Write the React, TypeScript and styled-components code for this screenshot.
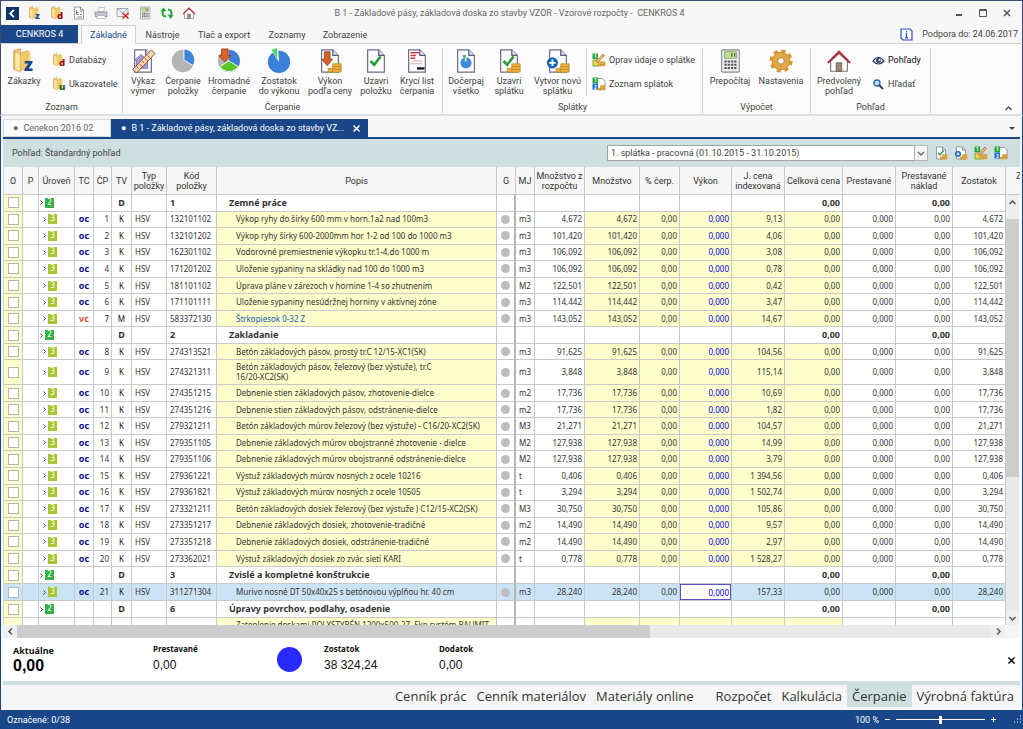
import React from "react";
import styled, { createGlobalStyle, css } from "styled-components";

const BLUE = "#19478a";
const TEAL = "#cfdfdf";
const YELLOW = "#fefecb";
const LINE = "#c9c9cc";

const GlobalStyle = createGlobalStyle`
  *, *::before, *::after { box-sizing: border-box; }
  body { margin: 0; font-family: Roboto, "Liberation Sans", sans-serif; font-size: 9px; line-height: 10px; color: #444; background: #f7f7f7; }
  button, input, select { font: inherit; color: inherit; margin: 0; }
  button { border: 0; background: none; padding: 0; cursor: pointer; }
  a { color: inherit; text-decoration: none; }
  svg { display: block; flex: none; }
`;

const Window = styled.div`
  display: flex;
  flex-direction: column;
  height: 100vh;
  border-top: 1px solid #3f4a70;
  overflow: hidden;
`;

const TitleBar = styled.header`
  flex: none;
  display: flex;
  align-items: center;
  height: 24px;
  padding: 0 9px 0 5px;
  border-left: 1px solid #3f4a70;
  border-right: 1px solid #3f4a70;
`;
const QuickBar = styled.div`
  display: flex;
  flex: 1;
  gap: 8px;
`;
const QuickButton = styled.button`
  width: 14px;
  height: 14px;
`;
const Title = styled.h1`
  margin: 0;
  font-size: 9px;
  font-weight: 400;
  color: #666;
  white-space: pre;
`;
const WindowButtons = styled.div`
  display: flex;
  flex: 1;
  justify-content: flex-end;
  gap: 12px;
`;
const WindowButton = styled.button`
  width: 12px;
  height: 12px;
`;

const RibbonTabs = styled.nav`
  flex: none;
  display: flex;
  height: 19px;
  border-left: 1px solid #3f4a70;
  border-right: 1px solid #3f4a70;
  border-bottom: 1px solid #cfcfcf;
`;
const FileTab = styled.button`
  width: 77px;
  height: 18px;
  margin-right: 3px;
  background: ${BLUE};
  color: #fff;
`;
const RibbonTab = styled.button<{ $active?: boolean; $width: number }>`
  width: ${(p) => p.$width}px;
  height: 19px;
  ${(p) =>
    p.$active &&
    css`
      color: ${BLUE};
      background: #fbfbfb;
      border: 1px solid #cfcfcf;
      border-bottom-color: #fbfbfb;
    `}
`;
const Support = styled.div`
  display: flex;
  align-items: center;
  gap: 9px;
  margin-left: auto;
  padding-right: 4px;
`;

const Ribbon = styled.section`
  flex: none;
  display: flex;
  height: 72px;
  padding: 4px 0 1px;
  background: #fbfbfb;
  border-left: 1px solid #3f4a70;
  border-right: 1px solid #3f4a70;
  border-bottom: 2px solid #dfdfdf;
`;
const Group = styled.div<{ $width: number }>`
  flex: none;
  width: ${(p) => p.$width}px;
  display: flex;
  flex-direction: column;
  border-right: 1px solid #d2d2d2;
`;
const GroupBody = styled.div`
  display: flex;
  flex: 1;
`;
const GroupTitle = styled.div`
  height: 11px;
  text-align: center;
`;
const BigButton = styled.button<{ $width: number }>`
  width: ${(p) => p.$width}px;
  display: flex;
  flex-direction: column;
  align-items: center;
  align-self: flex-start;
  white-space: pre;
  svg { margin-bottom: 2px; }
`;
const SmallList = styled.div<{ $ruled?: boolean }>`
  display: flex;
  flex-direction: column;
  gap: 10px;
  height: 48px;
  padding: 5px 0 0 5px;
  ${(p) => p.$ruled && css`border-left: 1px solid #d2d2d2;`}
`;
const SmallButton = styled.button<{ $strong?: boolean }>`
  display: flex;
  align-items: center;
  gap: 3px;
  height: 14px;
  white-space: nowrap;
  ${(p) => p.$strong && css`color: #111;`}
`;
const Collapse = styled.button`
  align-self: flex-end;
  margin: 0 9px 0 auto;
`;

const Body = styled.main`
  flex: 1;
  min-height: 0;
  display: flex;
  flex-direction: column;
  padding: 3px 2px 0;
  border-left: 1px solid ${BLUE};
  border-right: 1px solid ${BLUE};
`;
const DocTabs = styled.nav`
  flex: none;
  display: flex;
  height: 20px;
  border-bottom: 2px solid ${BLUE};
`;
const DocTab = styled.button<{ $active?: boolean; $width: number }>`
  width: ${(p) => p.$width}px;
  display: flex;
  align-items: center;
  gap: 5px;
  padding: 0 6px 0 9px;
  white-space: nowrap;
  background: ${(p) => (p.$active ? BLUE : "#f9f9f9")};
  color: ${(p) => (p.$active ? "#fff" : "#666")};
  border: 1px solid ${(p) => (p.$active ? BLUE : "#d8d8d8")};
  svg { margin-left: auto; }
`;
const DocMenu = styled.button`
  margin: 0 4px 0 auto;
`;

const FilterBar = styled.div`
  flex: none;
  display: flex;
  align-items: center;
  height: 28px;
  padding: 0 12px 0 9px;
  background: ${TEAL};
`;
const PeriodBox = styled.label`
  position: relative;
  width: 321px;
  margin: 0 6px 0 auto;
  svg { position: absolute; right: 0; top: 0; pointer-events: none; }
`;
const Period = styled.select`
  appearance: none;
  display: block;
  width: 100%;
  height: 16px;
  padding: 0 18px 0 3px;
  border: 1px solid #9aa5a5;
  border-radius: 0;
  background: #fff;
`;
const FilterTools = styled.div`
  display: flex;
  gap: 6px;
`;

const GridArea = styled.div`
  flex: 1;
  min-height: 0;
  display: flex;
  background: #fff;
  border-left: 1px solid #d5d5d5;
`;
const GridView = styled.div`
  flex: 1;
  min-width: 0;
  overflow: hidden;
`;
const Table = styled.table`
  width: 100%;
  height: 476px;
  table-layout: fixed;
  border-collapse: separate;
  border-spacing: 0;
  font-family: "Noto Sans", sans-serif;
  font-size: 8px;
  color: #333;
`;
const Col = styled.col<{ $width?: number }>`
  width: ${(p) => (p.$width ? p.$width + "px" : "auto")};
`;
const Head = styled.th`
  height: 28px;
  padding: 0;
  font-family: Roboto, sans-serif;
  font-size: 9px;
  font-weight: 400;
  background: #f6f6f6;
  border: solid ${LINE};
  border-width: 0 1px 1px 0;
  white-space: pre;
`;
type CellProps = { $align?: "right" | "center"; $tint?: boolean; $thick?: boolean; $pad?: number };
const Cell = styled.td<CellProps>`
  padding: 0 ${(p) => (p.$align === "right" ? 2 : 0)}px 0 ${(p) => p.$pad ?? (p.$align ? 0 : 3)}px;
  text-align: ${(p) => p.$align ?? "left"};
  border: solid ${LINE};
  border-width: 0 1px 1px 0;
  ${(p) => p.$thick && css`border-right: 2px solid #b5b5b8;`}
  ${(p) => p.$tint && css`background: ${YELLOW};`}
  white-space: pre;
  overflow: hidden;
`;
const ItemRow = styled.tr<{ $tall?: boolean; $selected?: boolean }>`
  height: ${(p) => (p.$tall ? 24 : 16)}px;
  ${(p) => p.$selected && css`td { background: #cbe4f5; }`}
`;
const SectionRow = styled.tr`
  height: 16px;
  font-size: 9px;
  font-weight: 700;
`;
const Tick = styled.input`
  appearance: none;
  display: block;
  width: 11px;
  height: 11px;
  margin: 0 auto;
  border: 1px solid #b5b5b5;
  background: #fff;
`;
const Level = styled.span<{ $section?: boolean }>`
  display: flex;
  align-items: center;
  gap: 1px;
  padding-left: ${(p) => (p.$section ? 1 : 4)}px;
`;
const LevelBox = styled.b<{ $section?: boolean }>`
  width: 9px;
  height: 10px;
  font: 400 8px/10px "DejaVu Sans Condensed", sans-serif;
  text-align: center;
  color: #fff;
  background: ${(p) => (p.$section ? "#35b34a" : "#a5c832")};
`;
const Kind = styled.b<{ $own?: boolean }>`
  font-size: 9px;
  color: ${(p) => (p.$own ? "#e2512d" : "#0a0a86")};
`;
const Dark = styled.span`
  color: #111;
`;
const ItemLink = styled.a`
  color: #0d5cb8;
`;
const Dot = styled.span`
  display: block;
  width: 9px;
  height: 9px;
  margin: 0 auto;
  border-radius: 50%;
  background: #bdbdbd;
`;
const Output = styled.span`
  color: #0000e0;
`;
const OutputInput = styled.input`
  display: block;
  width: 100%;
  height: 16px;
  padding: 0 1px;
  text-align: right;
  color: #0000e0;
  background: #fff;
  border: 1px solid #5a50c8;
  border-radius: 0;
`;

const SideRail = styled.div`
  flex: none;
  width: 14px;
  display: flex;
  flex-direction: column;
`;
const SideHead = styled.div`
  height: 28px;
  padding: 4px 0 0 10px;
  overflow: hidden;
  background: #f6f6f6;
  border-bottom: 1px solid ${LINE};
`;
const VTrack = styled.div`
  flex: 1;
  width: 13px;
  display: flex;
  flex-direction: column;
  background: #e9e9e9;
`;
const VArrow = styled.button`
  height: 24px;
  padding-bottom: 10px;
  display: grid;
  place-items: center;
  background: #efefef;
`;
const VThumb = styled.div`
  flex: 259;
  background: #cdcdcd;
`;
const VRest = styled.div`
  flex: 134;
`;
const VArrowEnd = styled(VArrow)`
  height: 14px;
  padding: 0;
`;
const HTrack = styled.div`
  flex: none;
  display: flex;
  height: 13px;
  margin-right: 2px;
  background: #e9e9e9;
`;
const HArrow = styled.button`
  width: 14px;
  display: grid;
  place-items: center;
  background: #efefef;
`;
const HThumb = styled.div`
  flex: 633;
  background: #cdcdcd;
`;
const HRest = styled.div`
  flex: 341;
`;
const HCorner = styled.div`
  width: 13px;
  background: #f6f6f6;
`;

const Summary = styled.section`
  flex: none;
  display: flex;
  height: 43px;
  padding: 5px 4px 0 10px;
  background: #fff;
  color: #111;
`;
const Stat = styled.dl<{ $width: number; $main?: boolean }>`
  margin: 0;
  width: ${(p) => p.$width}px;
  dt { font: 700 8px/12px "Noto Sans", sans-serif; }
  dd { margin: 0; font: 400 12px/20px "Liberation Sans", sans-serif; }
  ${(p) =>
    p.$main &&
    css`
      dt { padding-top: 2px; font-size: 9px; }
      dd { font-size: 16px; line-height: 18px; font-weight: 700; color: #000; }
    `}
`;
const StatDot = styled.div`
  width: 25px;
  height: 25px;
  margin: 4px 22px 0 0;
  border-radius: 50%;
  background: #2a2aff;
`;
const SummaryClose = styled.button`
  margin: 0 0 4px auto;
`;

const ViewTabs = styled.nav`
  flex: none;
  display: flex;
  justify-content: flex-end;
  height: 29px;
  padding: 0 1px 3px 0;
  border-top: 4px solid ${TEAL};
  background: #f6f6f6;
`;
const ViewTab = styled.button<{ $active?: boolean; $spaced?: boolean }>`
  padding: 0 5px;
  margin-left: ${(p) => (p.$spaced ? 12 : 0)}px;
  font: 400 13px/20px "Open Sans", sans-serif;
  color: #333;
  background: ${(p) => (p.$active ? TEAL : "none")};
`;

const StatusBar = styled.footer`
  flex: none;
  display: flex;
  align-items: center;
  height: 19px;
  padding: 0 1px 0 7px;
  background: ${BLUE};
  color: #fff;
`;
const ZoomBox = styled.div`
  display: flex;
  align-items: center;
  gap: 5px;
  margin: 0 16px 0 auto;
`;
const ZoomRange = styled.input`
  appearance: none;
  width: 89px;
  height: 11px;
  background: linear-gradient(#fff, #fff) center / 100% 1px no-repeat;
  &::-webkit-slider-thumb { appearance: none; width: 3px; height: 8px; background: #fff; }
`;

/* ---------- icons ---------- */

const Folder = ({ letter, color, size = 14 }: { letter: string; color: string; size?: number }) => (
  <svg width={size} height={size} viewBox="0 0 28 28">
    <path d="M3 3 10 1v5l8-3v18l-8 3-7-1z" fill="#f3d27a" stroke="#c79a3c" strokeWidth="1" />
    <path d="M10 6v20L4 23V4z" fill="#fbe7a6" stroke="#d2a94e" strokeWidth=".8" />
    <path d="M11 6 21 3v17l-10 5z" fill="#f0c964" opacity=".8" />
    <text x="14" y="25" fontFamily="Open Sans" fontWeight="800" fontSize="19" fill={color}>{letter}</text>
  </svg>
);

const Page = () => (
  <>
    <path d="M5 2h12l6 6v18H5z" fill="#fdfdff" stroke="#6a6f86" strokeWidth="1.3" />
    <path d="M17 2v6h6" fill="#dfe3ef" stroke="#55597a" strokeWidth="1.3" />
  </>
);
const Coins = () => (
  <g fill="#e9b040" stroke="#bd8420" strokeWidth=".8">
    <path d="M12 22h7v4h-7z" />
    <path d="M17 17h9v9h-9z" />
    <path d="M17 20h9M17 23h9" />
  </g>
);
const Tickmark = () => <path d="m8 14 4 4 7-9" fill="none" stroke="#2f9a3a" strokeWidth="2.8" />;
const Plus = () => (
  <>
    <circle cx="8" cy="16" r="6" fill="#1763b8" />
    <path d="M8 12.500v7M4.500 16h7" stroke="#fff" strokeWidth="2" />
  </>
);
const Badges = () => (
  <g fontFamily="Roboto" fontWeight="700" fontSize="10" fill="#fff">
    <rect x="1" y="1" width="11" height="11" fill="#2ca33a" />
    <text x="4" y="10">1</text>
  </g>
);

type IconName =
  | "measure" | "pie" | "pieGreen" | "pieRest" | "perform" | "check" | "cover" | "power" | "checkCoins"
  | "plusCoins" | "calc" | "gear" | "house" | "editPay" | "listPay" | "back" | "preview" | "print"
  | "mailX" | "refresh";

const ART: Record<IconName, React.ReactNode> = {
  measure: (
    <>
      <Page />
      <path d="M5 13 12 7l7 6v9H7v-9z" fill="#a99bd6" stroke="#7a6bb5" strokeWidth=".8" />
      <path d="M3 23 23 2l4 4L7 27z" fill="#f6d7b0" stroke="#8a4b2a" strokeWidth="1" />
      <path d="m7 20 2 2m1-5 3 3m0-6 2 2m1-5 3 3m0-6 2 2" stroke="#8a4b2a" strokeWidth="1" />
    </>
  ),
  pie: (
    <>
      <circle cx="14" cy="14" r="12" fill="#b4b4b6" />
      <path d="M15 13V1a12 12 0 0 1 10 18z" fill="#3f83d8" stroke="#fbfbfb" strokeWidth="1" />
    </>
  ),
  pieGreen: (
    <>
      <circle cx="14" cy="14" r="12" fill="#b4b4b6" />
      <path d="M14 14V2a12 12 0 0 1 10 18z" fill="#3f7fd4" />
      <path d="M14 14 24 20a12 12 0 0 1-20 0z" fill="#5cc628" stroke="#fbfbfb" strokeWidth="1" />
      <path d="M6 1h7v7h3l-6.500 7L3 8h3z" fill="#d9622a" stroke="#8f3412" strokeWidth=".8" />
    </>
  ),
  pieRest: (
    <>
      <circle cx="14" cy="15" r="12" fill="#3a80d6" />
      <path d="M14 15 5 2l8-2z" fill="#fbfbfb" />
      <path d="m12 12-6-10L12 0z" fill="#4fd36a" />
    </>
  ),
  perform: (
    <>
      <Page />
      <path d="M8 4h6v8h3l-6 7-6-7h3z" fill="#d9622a" stroke="#8f3412" strokeWidth=".8" />
      <Coins />
    </>
  ),
  check: (<><Page /><Tickmark /></>),
  cover: (
    <>
      <Page />
      <path d="M7 5h9M7 8h6M7 11h5" stroke="#cc3b3b" strokeWidth="1.600" />
      <path d="M9 14h11M7 17h13" stroke="#c9a0a0" strokeWidth="1" />
      <path d="M14 22h8" stroke="#111" strokeWidth="2.500" />
    </>
  ),
  power: (
    <>
      <Page />
      <circle cx="14" cy="16" r="6" fill="#3f8bd8" />
      <path d="M14 16 11 8l4-1z" fill="#fdfdff" />
      <path d="m13 13-3-5 4-1z" fill="#3fae74" />
    </>
  ),
  checkCoins: (<><Page /><Tickmark /><Coins /></>),
  plusCoins: (<><Page /><Plus /><Coins /></>),
  calc: (
    <>
      <rect x="5" y="2" width="19" height="24" rx="1" fill="#ececec" stroke="#8a8f8a" strokeWidth="1.200" />
      <rect x="8" y="4" width="13" height="7" fill="#c3dfa0" stroke="#7f9a63" strokeWidth=".8" />
      <path d="M16 5.500v4M19 5.500v4" stroke="#3c5a2a" strokeWidth="1.200" />
      <path d="M8 14.500h13M8 18h13M8 21.500h13" stroke="#555" strokeWidth="2" strokeDasharray="2.500 1" />
    </>
  ),
  gear: (
    <>
      <circle cx="14" cy="14" r="10.500" fill="none" stroke="#d99a33" strokeWidth="4" strokeDasharray="4.400 3.850" />
      <circle cx="14" cy="14" r="6.500" fill="none" stroke="#e0a747" strokeWidth="6" />
      <circle cx="14" cy="14" r="9.500" fill="none" stroke="#c98d2c" strokeWidth="1" />
      <circle cx="14" cy="14" r="3.500" fill="#fbfbfb" stroke="#b57a1e" strokeWidth="1" />
    </>
  ),
  house: (
    <>
      <path d="M5 14v11h18V14l-9-8z" fill="#fff" stroke="#777" strokeWidth="1.200" />
      <path d="M2 16 14 4l12 12" fill="none" stroke="#b3283a" strokeWidth="2.200" />
      <rect x="11" y="16" width="6" height="9" fill="#a9876e" stroke="#555" strokeWidth=".8" />
    </>
  ),
  editPay: (
    <>
      <Badges />
      <path d="M2 14h12v12H2z" fill="#ffd24a" stroke="#2ca33a" strokeWidth="1.500" />
      <Coins />
      <path d="m8 17 3 3L25 5l-3-3z" fill="#f3c56a" stroke="#a33" strokeWidth="1.200" />
    </>
  ),
  listPay: (
    <>
      <path d="M10 3h11l5 5v17H10z" fill="#fff" stroke="#667" strokeWidth="1.200" />
      <Badges />
      <rect x="1" y="13" width="11" height="12" fill="#1f6fd0" />
      <text x="4" y="23" fontFamily="Roboto" fontWeight="700" fontSize="10" fill="#fff">2</text>
      <Coins />
    </>
  ),
  back: (
    <>
      <rect width="28" height="28" fill="#0e3567" />
      <path d="m17 6-8 8 8 8" fill="none" stroke="#fff" strokeWidth="4" />
    </>
  ),
  preview: (
    <>
      <Page />
      <path d="M9 8v9h4m-4-4h4m3-2h4m-4 6h4m-9 5h9" fill="none" stroke="#555a70" strokeWidth="1.600" />
    </>
  ),
  print: (
    <>
      <path d="M8 11 11 3h10l-2 8z" fill="#fff" stroke="#8a8ea0" />
      <path d="M2 12h24v9H2z" fill="#c3c7d3" stroke="#777c8e" strokeWidth="1.200" />
      <path d="M7 19h14l2 6H5z" fill="#fff" stroke="#8a8ea0" />
    </>
  ),
  mailX: (
    <>
      <path d="M2 5h22v16H2z" fill="#f4f4f8" stroke="#8a8ea0" strokeWidth="1.500" />
      <path d="m2 5 11 9 11-9" fill="none" stroke="#8a8ea0" strokeWidth="1.500" />
      <path d="m13 14 12 11M25 14 13 25" stroke="#d8201f" strokeWidth="3" />
    </>
  ),
  refresh: (
    <>
      <path d="M12 21C5 21 4 15 6 9" fill="none" stroke="#22a53a" strokeWidth="4" />
      <path d="M1 11 7 3l6 7z" fill="#22a53a" />
      <path d="M16 7c7 0 8 6 6 12" fill="none" stroke="#22a53a" strokeWidth="4" />
      <path d="m15 17 6 9 6-8z" fill="#22a53a" />
    </>
  ),
};

const Icon = ({ name, size = 28 }: { name: IconName; size?: number }) => (
  <svg width={size} height={size} viewBox="0 0 28 28">{ART[name]}</svg>
);

const Chevron = ({ d, color = "#555" }: { d: string; color?: string }) => (
  <svg width="9" height="9" viewBox="0 0 9 9">
    <path d={d} fill="none" stroke={color} strokeWidth="1.500" />
  </svg>
);
const UP = "M1.500 6 4.500 3l3 3";
const DOWN = "m1.500 3 3 3 3-3";
const LEFT = "m6 1.500-3 3 3 3";
const RIGHT = "m3 1.500 3 3-3 3";
const CROSS = "m1.500 1.500 6 6m0-6-6 6";

/* ---------- data ---------- */

type Item = { n: number; code: string; text: string; unit: string; qty: string; price: string; own?: boolean; tall?: boolean; selected?: boolean };
type Section = { section: string; text: string };

const item = (n: number, code: string, text: string, unit: string, qty: string, price: string, extra: Partial<Item> = {}): Item => ({
  n, code, text, unit, qty, price, ...extra,
});

const ROWS: (Item | Section)[] = [
  { section: "1", text: "Zemné práce" },
  item(1, "132101102", "Výkop ryhy do šírky 600 mm v horn.1a2 nad 100m3", "m3", "4,672", "9,13"),
  item(2, "132101202", "Výkop ryhy šírky 600-2000mm hor 1-2 od 100 do 1000 m3", "m3", "101,420", "4,06"),
  item(3, "162301102", "Vodorovné premiestnenie výkopku tr.1-4,do 1000 m", "m3", "106,092", "3,08"),
  item(4, "171201202", "Uloženie sypaniny na skládky nad 100 do 1000 m3", "m3", "106,092", "0,78"),
  item(5, "181101102", "Úprava pláne v zárezoch v hornine 1-4 so zhutnením", "M2", "122,501", "0,42"),
  item(6, "171101111", "Uloženie sypaniny nesúdržnej horniny v aktívnej zóne", "m3", "114,442", "3,47"),
  item(7, "583372130", "Štrkopiesok 0-32 Z", "m3", "143,052", "14,67", { own: true }),
  { section: "2", text: "Zakladanie" },
  item(8, "274313521", "Betón základových pásov, prostý tr.C 12/15-XC1(SK)", "m3", "91,625", "104,56"),
  item(9, "274321311", "Betón základových pásov, železový (bez výstuže), tr.C\n16/20-XC2(SK)", "m3", "3,848", "115,14", { tall: true }),
  item(10, "274351215", "Debnenie stien základových pásov, zhotovenie-dielce", "m2", "17,736", "10,69"),
  item(11, "274351216", "Debnenie stien základových pásov, odstránenie-dielce", "m2", "17,736", "1,82"),
  item(12, "279321211", "Betón základových múrov železový (bez výstuže) - C16/20-XC2(SK)", "M3", "21,271", "104,57"),
  item(13, "279351105", "Debnenie základových múrov obojstranné zhotovenie - dielce", "M2", "127,938", "14,99"),
  item(14, "279351106", "Debnenie základových múrov obojstranné odstránenie-dielce", "M2", "127,938", "3,79"),
  item(15, "279361221", "Výstuž základových múrov nosných z ocele 10216", "t", "0,406", "1 394,56"),
  item(16, "279361821", "Výstuž základových múrov nosných z ocele 10505", "t", "3,294", "1 502,74"),
  item(17, "273321211", "Betón základových dosiek železový (bez výstuže ) C12/15-XC2(SK)", "M3", "30,750", "105,86"),
  item(18, "273351217", "Debnenie základových dosiek, zhotovenie-tradičné", "m2", "14,490", "9,57"),
  item(19, "273351218", "Debnenie základových dosiek, odstránenie-tradičné", "m2", "14,490", "2,97"),
  item(20, "273362021", "Výstuž základových dosiek zo zvár. sietí KARI", "t", "0,778", "1 528,27"),
  { section: "3", text: "Zvislé a kompletné konštrukcie" },
  item(21, "311271304", "Murivo nosné DT 50x40x25 s betónovou výplňou hr. 40 cm", "m3", "28,240", "157,33", { selected: true }),
  { section: "6", text: "Úpravy povrchov, podlahy, osadenie" },
  item(22, "", "Zateplenie doskami POLYSTYRÉN 1200x500-27, Fkp systém BAUMIT\n ", "", "", "", { tall: true }),
];

const COLUMNS: [string, number?][] = [
  ["O", 19], ["P", 16], ["Úroveň", 36], ["TC", 19], ["ČP", 18], ["TV", 20], ["Typ\npoložky", 35], ["Kód\npoložky", 50],
  ["Popis"], ["G", 19], ["MJ", 19], ["Množstvo z\nrozpočtu", 50], ["Množstvo", 55], ["% čerp.", 40], ["Výkon", 52],
  ["J. cena\nindexovaná", 53], ["Celková cena", 58], ["Prestavané", 53], ["Prestavané\nnáklad", 57], ["Zostatok", 53],
];

const LevelTag = ({ section }: { section?: boolean }) => (
  <Level $section={section}>
    <svg width="4" height="7" viewBox="0 0 4 7"><path d="M.500 1.500 2.500 3.500l-2 2" fill="none" stroke="#444" /></svg>
    <LevelBox $section={section}>{section ? 2 : 3}</LevelBox>
  </Level>
);

const SectionLine = ({ row }: { row: Section }) => (
  <SectionRow>
    <Cell $align="center" $tint><Tick type="checkbox" aria-label={row.text} /></Cell>
    <Cell /><Cell $pad={0}><LevelTag section /></Cell><Cell /><Cell />
    <Cell $align="center">D</Cell><Cell /><Cell>{row.section}</Cell>
    <Cell $pad={12}>{row.text}</Cell><Cell $thick /><Cell /><Cell /><Cell /><Cell /><Cell /><Cell />
    <Cell $align="right">0,00</Cell><Cell /><Cell $align="right">0,00</Cell><Cell />
  </SectionRow>
);

const PartialLine = ({ row }: { row: Item }) => (
  <ItemRow $tall>
    <Cell $tint /><Cell /><Cell /><Cell /><Cell /><Cell /><Cell /><Cell />
    <Cell $tint $pad={19}>{row.text}</Cell>
    <Cell $thick /><Cell /><Cell />
    <Cell $tint /><Cell $tint /><Cell $tint /><Cell $tint /><Cell $tint />
    <Cell /><Cell /><Cell />
  </ItemRow>
);

const ItemLine = ({ row }: { row: Item }) => (
  <ItemRow $tall={row.tall} $selected={row.selected}>
    <Cell $align="center" $tint><Tick type="checkbox" aria-label={row.code} /></Cell>
    <Cell />
    <Cell $pad={0}><LevelTag /></Cell>
    <Cell $align="center"><Kind $own={row.own}>{row.own ? "vc" : "oc"}</Kind></Cell>
    <Cell $align="right">{row.n}</Cell>
    <Cell $align="center"><Dark>{row.own ? "M" : "K"}</Dark></Cell>
    <Cell>HSV</Cell>
    <Cell>{row.code}</Cell>
    <Cell $tint $pad={19}>{row.own ? <ItemLink href="#item">{row.text}</ItemLink> : row.text}</Cell>
    <Cell $align="center" $thick><Dot /></Cell>
    <Cell>{row.unit}</Cell>
    <Cell $align="right">{row.qty}</Cell>
    <Cell $align="right" $tint>{row.qty}</Cell>
    <Cell $align="right" $tint>0,00</Cell>
    {row.selected ? (
      <Cell $pad={0}><OutputInput defaultValue="0,000" aria-label="Výkon" /></Cell>
    ) : (
      <Cell $align="right" $tint><Output>0,000</Output></Cell>
    )}
    <Cell $align="right" $tint>{row.price}</Cell>
    <Cell $align="right" $tint>0,00</Cell>
    <Cell $align="right">0,000</Cell>
    <Cell $align="right">0,00</Cell>
    <Cell $align="right">{row.qty}</Cell>
  </ItemRow>
);

const GridLine = ({ row }: { row: Item | Section }) => {
  if ("section" in row) return <SectionLine row={row} />;
  return row.code ? <ItemLine row={row} /> : <PartialLine row={row} />;
};

const Big = ({ icon, label, width }: { icon: IconName; label: string; width: number }) => (
  <BigButton $width={width}><Icon name={icon} size={26} />{label}</BigButton>
);

export default function App() {
  return (
    <Window>
      <GlobalStyle />
      <TitleBar>
        <QuickBar>
          <QuickButton aria-label="Späť"><Icon name="back" size={13} /></QuickButton>
          <QuickButton aria-label="Zákazky"><Folder letter="z" color="#174a8c" /></QuickButton>
          <QuickButton aria-label="Databázy"><Folder letter="d" color="#a00f1c" /></QuickButton>
          <QuickButton aria-label="Náhľad"><Icon name="preview" size={14} /></QuickButton>
          <QuickButton aria-label="Tlač"><Icon name="print" size={14} /></QuickButton>
          <QuickButton aria-label="Zrušiť"><Icon name="mailX" size={14} /></QuickButton>
          <QuickButton aria-label="Kalkulačka"><Icon name="calc" size={14} /></QuickButton>
          <QuickButton aria-label="Obnoviť"><Icon name="refresh" size={14} /></QuickButton>
          <QuickButton aria-label="Domov"><Icon name="house" size={14} /></QuickButton>
        </QuickBar>
        <Title>{"B 1 - Základové pásy, základová doska zo stavby VZOR - Vzorové rozpočty -  CENKROS 4"}</Title>
        <WindowButtons>
          <WindowButton aria-label="Minimalizovať">
            <svg width="12" height="12"><path d="M3 8h6" stroke="#555" strokeWidth="2" /></svg>
          </WindowButton>
          <WindowButton aria-label="Maximalizovať">
            <svg width="12" height="12"><path d="M2.500 2.500h7v7h-7zM2.500 3.500h7" fill="none" stroke="#555" /></svg>
          </WindowButton>
          <WindowButton aria-label="Zavrieť">
            <svg width="12" height="12"><path d="m3 3 6 6m0-6-6 6" stroke="#555" strokeWidth="1.500" /></svg>
          </WindowButton>
        </WindowButtons>
      </TitleBar>

      <RibbonTabs>
        <FileTab>CENKROS 4</FileTab>
        <RibbonTab $active $width={55}>Základné</RibbonTab>
        <RibbonTab $width={53}>Nástroje</RibbonTab>
        <RibbonTab $width={70}>Tlač a export</RibbonTab>
        <RibbonTab $width={56}>Zoznamy</RibbonTab>
        <RibbonTab $width={60}>Zobrazenie</RibbonTab>
        <Support>
          <svg width="13" height="13" viewBox="0 0 13 13">
            <path d="M1 1h9l2 2v9H3l-2-2z" fill="#fff" stroke="#2450b4" strokeWidth="1.200" />
            <path d="M6.500 3v1.500m0 1V10M5.500 6h1M5 9.800h3" stroke="#2450b4" strokeWidth="1.200" />
          </svg>
          Podpora do: 24.06.2017
        </Support>
      </RibbonTabs>

      <Ribbon>
        <Group $width={122}>
          <GroupBody>
            <BigButton $width={46}><Folder letter="z" color="#174a8c" size={26} />Zákazky</BigButton>
            <SmallList>
              <SmallButton><Folder letter="d" color="#a00f1c" />Databázy</SmallButton>
              <SmallButton><Folder letter="u" color="#1c5a2c" />Ukazovatele</SmallButton>
            </SmallList>
          </GroupBody>
          <GroupTitle>Zoznam</GroupTitle>
        </Group>
        <Group $width={320}>
          <GroupBody>
            <Big icon="measure" label={"Výkaz\nvýmer"} width={40} />
            <Big icon="pie" label={"Čerpanie\npoložky"} width={40} />
            <Big icon="pieGreen" label={"Hromadné\nčerpanie"} width={52} />
            <Big icon="pieRest" label={"Zostatok\ndo výkonu"} width={48} />
            <Big icon="perform" label={"Výkon\npodľa ceny"} width={54} />
            <Big icon="check" label={"Uzavri\npoložku"} width={38} />
            <Big icon="cover" label={"Krycí list\nčerpania"} width={44} />
          </GroupBody>
          <GroupTitle>Čerpanie</GroupTitle>
        </Group>
        <Group $width={260}>
          <GroupBody>
            <Big icon="power" label={"Dočerpaj\nvšetko"} width={46} />
            <Big icon="checkCoins" label={"Uzavri\nsplátku"} width={40} />
            <Big icon="plusCoins" label={"Vytvor novú\nsplátku"} width={57} />
            <SmallList $ruled>
              <SmallButton><Icon name="editPay" size={14} />Oprav údaje o splátke</SmallButton>
              <SmallButton><Icon name="listPay" size={14} />Zoznam splátok</SmallButton>
            </SmallList>
          </GroupBody>
          <GroupTitle>Splátky</GroupTitle>
        </Group>
        <Group $width={108}>
          <GroupBody>
            <Big icon="calc" label="Prepočítaj" width={54} />
            <Big icon="gear" label="Nastavenia" width={48} />
          </GroupBody>
          <GroupTitle>Výpočet</GroupTitle>
        </Group>
        <Group $width={120}>
          <GroupBody>
            <Big icon="house" label={"Predvolený\npohľad"} width={56} />
            <SmallList>
              <SmallButton $strong>
                <svg width="13" height="13" viewBox="0 0 13 13">
                  <path d="M1 7q5.500-7 11 0-5.500 6-11 0z" fill="#fff" stroke="#1b2a44" strokeWidth="1.200" />
                  <circle cx="6.500" cy="6.500" r="2.500" fill="#27466f" />
                  <circle cx="7.500" cy="6" r="1" fill="#fff" />
                </svg>
                Pohľady
              </SmallButton>
              <SmallButton>
                <svg width="13" height="13" viewBox="0 0 13 13">
                  <circle cx="5" cy="5" r="3" fill="#bfe0f7" stroke="#2f6fb0" strokeWidth="1.400" />
                  <path d="m7 7 4 4" stroke="#2b3f66" strokeWidth="2" />
                </svg>
                Hľadať
              </SmallButton>
            </SmallList>
          </GroupBody>
          <GroupTitle>Pohľad</GroupTitle>
        </Group>
        <Collapse aria-label="Zbaliť"><Chevron d={UP} /></Collapse>
      </Ribbon>

      <Body>
        <DocTabs>
          <DocTab $width={108}><span>●</span>Cenekon 2016 02</DocTab>
          <DocTab $active $width={257}>
            <span>●</span>B 1 - Základové pásy, základová doska zo stavby VZ...
            <Chevron d={CROSS} color="#fff" />
          </DocTab>
          <DocMenu aria-label="Zoznam kariet">
            <svg width="8" height="5"><path d="M1 1h6L4 4z" fill="#444" /></svg>
          </DocMenu>
        </DocTabs>

        <FilterBar>
          Pohľad: Štandardný pohľad
          <PeriodBox>
            <Period aria-label="Splátka">
              <option>1. splátka - pracovná (01.10.2015 - 31.10.2015)</option>
            </Period>
            <svg width="14" height="16">
              <path d="M.500.500h13v15H.500z" fill="#f4f4f4" stroke="#b0b8b8" />
              <path d="m4 7 3 3 3-3" fill="none" stroke="#555" strokeWidth="1.200" />
            </svg>
          </PeriodBox>
          <FilterTools>
            <QuickButton aria-label="Uzavri splátku"><Icon name="checkCoins" size={14} /></QuickButton>
            <QuickButton aria-label="Vytvor splátku"><Icon name="plusCoins" size={14} /></QuickButton>
            <QuickButton aria-label="Oprav splátku"><Icon name="editPay" size={14} /></QuickButton>
            <QuickButton aria-label="Zoznam splátok"><Icon name="listPay" size={14} /></QuickButton>
          </FilterTools>
        </FilterBar>

        <GridArea>
          <GridView>
            <Table>
              <colgroup>{COLUMNS.map(([name, width]) => <Col key={name} $width={width} />)}</colgroup>
              <thead><tr>{COLUMNS.map(([name]) => <Head key={name} scope="col">{name}</Head>)}</tr></thead>
              <tbody>{ROWS.map((row) => <GridLine key={row.text} row={row} />)}</tbody>
            </Table>
          </GridView>
          <SideRail>
            <SideHead>Z</SideHead>
            <VTrack>
              <VArrow aria-label="Hore"><Chevron d={UP} /></VArrow>
              <VThumb />
              <VRest />
              <VArrowEnd aria-label="Dole"><Chevron d={DOWN} /></VArrowEnd>
            </VTrack>
          </SideRail>
        </GridArea>
        <HTrack>
          <HArrow aria-label="Vľavo"><Chevron d={LEFT} /></HArrow>
          <HThumb />
          <HRest />
          <HArrow aria-label="Vpravo"><Chevron d={RIGHT} /></HArrow>
          <HCorner />
        </HTrack>

        <Summary>
          <Stat $width={140} $main><dt>Aktuálne</dt><dd>0,00</dd></Stat>
          <Stat $width={124}><dt>Prestavané</dt><dd>0,00</dd></Stat>
          <StatDot />
          <Stat $width={115}><dt>Zostatok</dt><dd>38 324,24</dd></Stat>
          <Stat $width={115}><dt>Dodatok</dt><dd>0,00</dd></Stat>
          <SummaryClose aria-label="Zavrieť súhrn"><Chevron d={CROSS} color="#000" /></SummaryClose>
        </Summary>

        <ViewTabs>
          <ViewTab>Cenník prác</ViewTab>
          <ViewTab>Cenník materiálov</ViewTab>
          <ViewTab>Materiály online</ViewTab>
          <ViewTab $spaced>Rozpočet</ViewTab>
          <ViewTab>Kalkulácia</ViewTab>
          <ViewTab $active>Čerpanie</ViewTab>
          <ViewTab>Výrobná faktúra</ViewTab>
        </ViewTabs>
      </Body>

      <StatusBar>
        Označené: 0/38
        <ZoomBox>
          <span>100 %</span>
          <button aria-label="Zmenšiť"><svg width="7" height="7"><path d="M1 3.500h5" stroke="#fff" /></svg></button>
          <ZoomRange type="range" min={0} max={200} defaultValue={100} aria-label="Mierka" />
          <button aria-label="Zväčšiť"><svg width="7" height="7"><path d="M1 3.500h5M3.500 1v5" stroke="#fff" /></svg></button>
        </ZoomBox>
        <svg width="9" height="9" viewBox="0 0 9 9">
          <path d="M7 1h1M7 4h1M4 4h1M7 7h1M4 7h1M1 7h1" stroke="#b9c9e2" strokeWidth="1.500" />
        </svg>
      </StatusBar>
    </Window>
  );
}
